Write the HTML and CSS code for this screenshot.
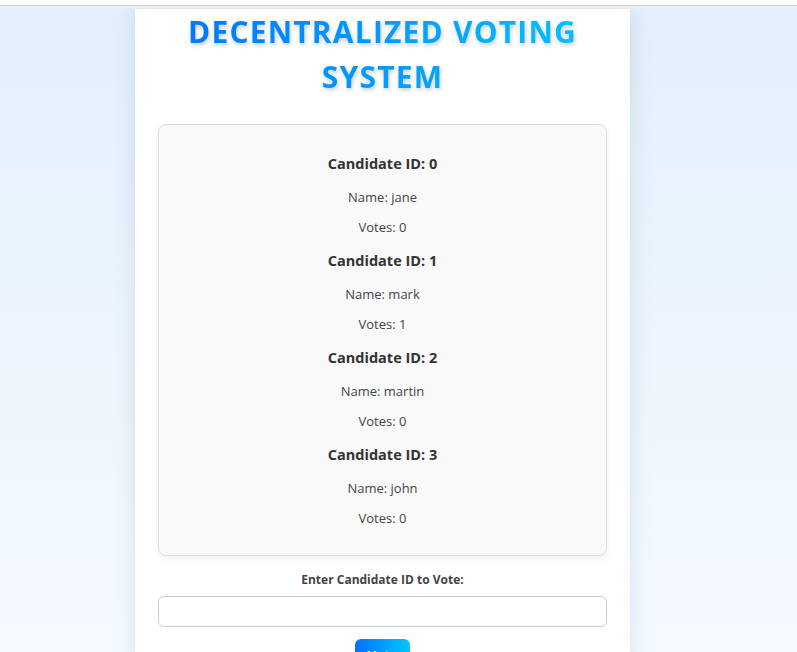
FILE: index.html
```html
<!DOCTYPE html>
<html lang="en">
<head>
<meta charset="utf-8">
<title>Decentralized Voting System</title>
<link rel="stylesheet" href="styles.css">
</head>
<body>
<div class="chrome"></div>
<main class="container">
  <h1 class="title">Decentralized Voting System</h1>
  <section class="candidates">
    <div class="candidate">
      <h3>Candidate ID: 0</h3>
      <p>Name: jane</p>
      <p>Votes: 0</p>
    </div>
    <div class="candidate">
      <h3>Candidate ID: 1</h3>
      <p>Name: mark</p>
      <p>Votes: 1</p>
    </div>
    <div class="candidate">
      <h3>Candidate ID: 2</h3>
      <p>Name: martin</p>
      <p>Votes: 0</p>
    </div>
    <div class="candidate">
      <h3>Candidate ID: 3</h3>
      <p>Name: john</p>
      <p>Votes: 0</p>
    </div>
  </section>
  <label class="vote-label" for="cid">Enter Candidate ID to Vote:</label>
  <input class="vote-input" id="cid" type="text">
  <button class="vote-btn">Vote</button>
</main>
</body>
</html>
```
FILE: styles.css
```css
html, body {
  margin: 0;
  padding: 0;
  height: 100%;
  overflow: hidden;
}
body {
  font-family: "Open Sans", "Noto Sans", sans-serif;
  background: linear-gradient(180deg, #e2effb 0%, #f5faff 100%);
  color: #333;
}
.chrome {
  height: 5px;
  background: #fff;
  border-bottom: 1px solid #d3d3d3;
  box-shadow: 0 2px 1px #efefef;
  position: relative;
  z-index: 2;
}
.container {
  width: 495px;
  margin: 3px 0 0 135px;
  background: #fff;
  box-sizing: border-box;
  padding: 0 23px 20px;
  box-shadow: 0 0 18px rgba(120, 150, 180, 0.25);
  min-height: 700px;
  display: flex;
  flex-direction: column;
  align-items: center;
}
.title {
  margin: 0;
  font-size: 30px;
  line-height: 45px;
  font-weight: 700;
  text-transform: uppercase;
  letter-spacing: 1.2px;
  text-align: center;
  background: linear-gradient(90deg, #0072ff, #00c6ff);
  -webkit-background-clip: text;
  background-clip: text;
  color: transparent;
  filter: drop-shadow(1px 2px 2px rgba(0, 0, 0, 0.22));
}
.candidates {
  align-self: stretch;
  margin-top: 25px;
  background: #f9f9f9;
  border: 1px solid #ddd;
  border-radius: 8px;
  padding: 15px 20px 17px;
  box-shadow: 0 3px 8px rgba(0, 0, 0, 0.06);
  text-align: center;
}
.candidate h3 {
  margin: 14px 0 13px;
  font-size: 14.5px;
  line-height: 20px;
  font-weight: 700;
  color: #333;
}
.candidate p {
  margin: 10px 0;
  font-size: 13px;
  line-height: 20px;
  color: #444;
}
.vote-label {
  margin-top: 14px;
  font-size: 12px;
  line-height: 20px;
  font-weight: 700;
  color: #444;
}
.vote-input {
  align-self: stretch;
  margin-top: 6px;
  height: 31px;
  box-sizing: border-box;
  border: 1px solid #ccc;
  border-radius: 6px;
  background: #fff;
}
.vote-btn {
  margin-top: 12px;
  width: 55px;
  padding: 8px 0 10px;
  line-height: 16px;
  border: none;
  border-radius: 6px;
  background: linear-gradient(90deg, #0072ff, #00c6ff);
  color: #fff;
  font-family: inherit;
  font-size: 13px;
  font-weight: 700;
}
```
